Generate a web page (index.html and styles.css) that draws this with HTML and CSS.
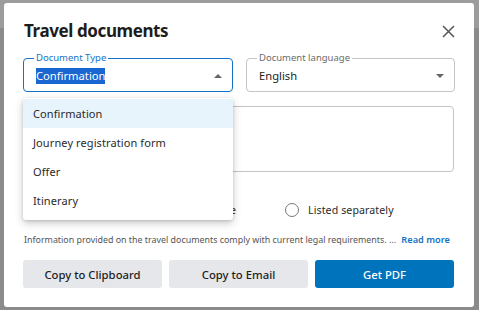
FILE: index.html
```html
<!DOCTYPE html>
<html lang="en">
<head>
  <meta charset="UTF-8">
  <title>Travel documents</title>
  <link rel="stylesheet" href="styles.css">
</head>
<body>
  <div class="backdrop-top"></div>

  <div class="modal">
    <div class="modal-head">
      <h2>Travel documents</h2>
      <button class="close" aria-label="Close">
        <svg width="13" height="13" viewBox="0 0 13 13"><path d="M1 1L12 12M12 1L1 12" stroke="#555" stroke-width="1.5" fill="none"/></svg>
      </button>
    </div>

    <div class="fields">
      <fieldset class="field active">
        <legend>Document Type</legend>
        <div class="value"><span class="selected">Confirmation</span><i class="caret up"></i></div>
      </fieldset>
      <fieldset class="field">
        <legend>Document language</legend>
        <div class="value"><span>English</span><i class="caret"></i></div>
      </fieldset>

      <ul class="menu">
        <li class="current">Confirmation</li>
        <li>Journey registration form</li>
        <li>Offer</li>
        <li>Itinerary</li>
      </ul>
    </div>

    <div class="notes"></div>

    <div class="radios">
      <label class="radio first"><span class="dot"></span>Included in the price table</label>
      <label class="radio"><span class="dot"></span>Listed separately</label>
    </div>

    <p class="info">Information provided on the travel documents comply with current legal requirements. ... <a href="#">Read more</a></p>

    <div class="actions">
      <button class="btn">Copy to Clipboard</button>
      <button class="btn">Copy to Email</button>
      <button class="btn primary">Get PDF</button>
    </div>
  </div>
</body>
</html>
```

FILE: styles.css
```css
body {
  margin: 0;
  padding: 3px 5px 3px 4px;
  background: #8b8b8b;
  font-family: "Noto Sans", "Open Sans", sans-serif;
  color: #222;
}
.backdrop-top {
  position: absolute;
  top: 0; left: 0; right: 0;
  height: 28px;
  background: #9c9c9c;
}
.modal {
  position: relative;
  background: #fff;
  border-radius: 3px;
  width: 470px;
  height: 304px;
  box-sizing: border-box;
  padding: 14px 20px 19px 19px;
}
.modal-head {
  display: flex;
  justify-content: space-between;
  align-items: center;
  padding-left: 1px;
}
h2 {
  margin: 0;
  font-size: 17px;
  letter-spacing: -0.4px;
  font-weight: bold;
  line-height: 28px;
  color: #1d1d1d;
}
.close {
  border: none;
  background: none;
  padding: 0;
  margin-right: -1px;
  width: 13px;
  height: 13px;
  display: flex;
}

.fields {
  position: relative;
  display: grid;
  grid-template-columns: 210px 209px;
  gap: 13px;
  margin-top: 6px;
}
.field {
  margin: 0;
  border: 1px solid #c4c4c4;
  border-radius: 4px;
  padding: 0 10px 7px 12px;
  min-width: 0;
}
.field legend {
  font-size: 9.5px;
  line-height: 14px;
  padding: 0 2px;
  margin-left: -2px;
  color: #6b6b6b;
}
.field.active { border-color: #1473c5; }
.field.active legend { color: #1473c5; }
.value {
  display: flex;
  justify-content: space-between;
  align-items: center;
  font-size: 11.2px;
  line-height: 16px;
  padding-top: 3px;
}
.selected {
  background: #1a67d2;
  color: #fff;
}
.caret {
  width: 0;
  height: 0;
  border-left: 4px solid transparent;
  border-right: 4px solid transparent;
  border-top: 4px solid #666;
}
.caret.up {
  border-top: none;
  border-bottom: 4px solid #666;
}

.menu {
  position: absolute;
  left: 0;
  top: 47px;
  width: 210px;
  margin: 0;
  padding: 1px 0 5px;
  list-style: none;
  background: #fff;
  border-radius: 3px;
  box-shadow: 0 3px 8px rgba(0,0,0,0.22), 0 1px 3px rgba(0,0,0,0.12);
  z-index: 2;
}
.menu li {
  font-size: 11px;
  line-height: 29px;
  padding-left: 10px;
  color: #2a2a2a;
  letter-spacing: 0.1px;
}
.menu li.current { background: #e8f4fc; }

.notes {
  margin-top: 14px;
  height: 64px;
  border: 1px solid #c4c4c4;
  border-radius: 4px;
}

.radios {
  display: flex;
  gap: 49px;
  margin-top: 30px;
  font-size: 10.6px;
  line-height: 16px;
}
.radio {
  display: flex;
  align-items: center;
  gap: 9px;
  color: #2a2a2a;
  letter-spacing: 0.1px;
}
.radio.first {
  width: 213px;
  justify-content: flex-end;
}
.dot {
  width: 12px;
  height: 12px;
  border: 1px solid #777;
  border-radius: 50%;
}

.info {
  margin: 16px 0 0;
  font-size: 8.9px;
  line-height: 12px;
  color: #555;
  padding-left: 1px;
}
.info a {
  color: #1473c5;
  text-decoration: none;
  font-weight: 600;
  font-size: 9.2px;
  margin-left: 3px;
}

.actions {
  display: grid;
  grid-template-columns: 1fr 1fr 1fr;
  gap: 7px;
  margin-top: 14px;
}
.btn {
  height: 28px;
  border: none;
  border-radius: 3px;
  background: #e6e7eb;
  color: #1d1d1d;
  font-family: inherit;
  font-size: 11.3px;
  font-weight: 500;
  cursor: pointer;
}
.btn.primary {
  background: #0073bd;
  color: #fff;
}
```
